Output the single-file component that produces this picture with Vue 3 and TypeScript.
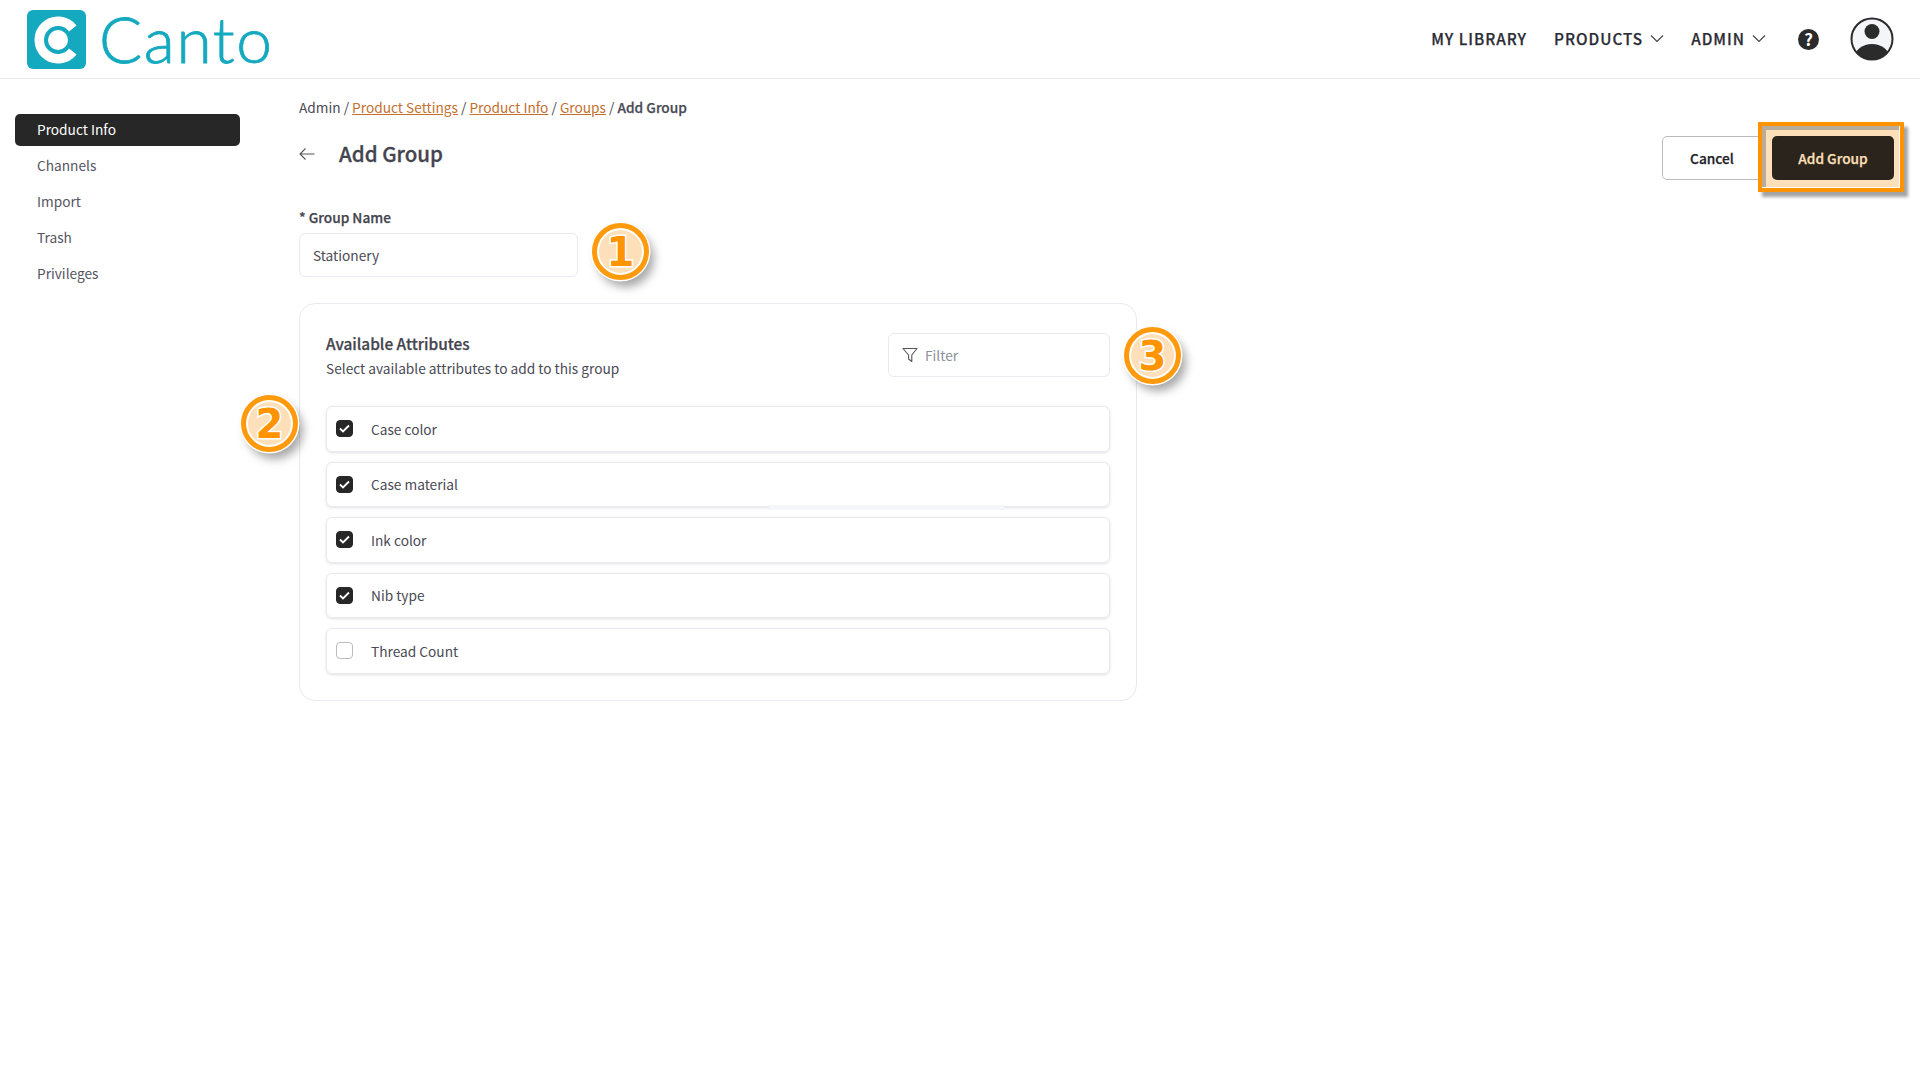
<script setup lang="ts">
const sideItems = ['Product Info', 'Channels', 'Import', 'Trash', 'Privileges']

const attributes = [
  { name: 'Case color', checked: true },
  { name: 'Case material', checked: true },
  { name: 'Ink color', checked: true },
  { name: 'Nib type', checked: true },
  { name: 'Thread Count', checked: false }
]
</script>

<template>
  <div class="page">
    <header class="topbar">
      <div class="logo">
        <svg class="logo-mark" width="59" height="59" viewBox="0 0 59 59">
          <rect width="59" height="59" rx="6" fill="#14a9bf" />
          <path d="M45.8 18.5 A18.75 18.75 0 1 0 45.8 41.5" fill="none" stroke="#fff" stroke-width="9.5" />
          <circle cx="31" cy="30" r="10" fill="#fff" />
        </svg>
        <span class="logo-word">Canto</span>
      </div>
      <nav class="topnav">
        <a class="nav-link">MY LIBRARY</a>
        <a class="nav-link">PRODUCTS
          <svg width="14" height="9" viewBox="0 0 14 9"><path d="M1 1.5l6 6 6-6" fill="none" stroke="#44444c" stroke-width="1.2" /></svg>
        </a>
        <a class="nav-link">ADMIN
          <svg width="14" height="9" viewBox="0 0 14 9"><path d="M1 1.5l6 6 6-6" fill="none" stroke="#44444c" stroke-width="1.2" /></svg>
        </a>
        <span class="help">?</span>
        <svg class="avatar" width="44" height="44" viewBox="0 0 44 44">
          <defs>
            <clipPath id="avatar-clip"><circle cx="22" cy="22" r="20.5" /></clipPath>
          </defs>
          <circle cx="22" cy="22" r="20.5" fill="#f4f5f9" />
          <circle cx="22" cy="14.5" r="7.5" fill="#2b2b2b" />
          <ellipse cx="22" cy="40" rx="17" ry="13" fill="#2b2b2b" clip-path="url(#avatar-clip)" />
          <circle cx="22" cy="22" r="20.5" fill="none" stroke="#2b2b2b" stroke-width="2" />
        </svg>
      </nav>
    </header>

    <div class="layout">
      <aside class="sidebar">
        <a
          v-for="(item, index) in sideItems"
          :key="item"
          class="side-item"
          :class="{ active: index === 0 }"
        >{{ item }}</a>
      </aside>

      <main class="content">
        <div class="breadcrumb">
          Admin / <a>Product Settings</a> / <a>Product Info</a> / <a>Groups</a> / <strong>Add Group</strong>
        </div>

        <div class="title-row">
          <div class="title">
            <svg width="16" height="12" viewBox="0 0 16 12"><path d="M15.5 6H1M6.5.5L1 6l5.5 5.5" fill="none" stroke="#55555c" stroke-width="1.1" /></svg>
            <h1>Add Group</h1>
          </div>
          <div class="actions">
            <button class="btn btn-cancel">Cancel</button>
            <div class="add-wrap">
              <span class="mark"></span>
              <button class="btn btn-add">Add Group</button>
            </div>
          </div>
        </div>

        <label class="field-label">* Group Name</label>
        <div class="input name-input">Stationery</div>

        <section class="card">
          <div class="card-head">
            <div>
              <h2>Available Attributes</h2>
              <p>Select available attributes to add to this group</p>
            </div>
            <div class="input filter">
              <svg width="16" height="16" viewBox="0 0 16 16"><path d="M1 1.5h14L9.8 8v6.5L6.6 12V8z" fill="none" stroke="#55555c" stroke-width="1.1" stroke-linejoin="round" /></svg>
              <span>Filter</span>
            </div>
          </div>
          <div class="rows">
            <div v-for="(attr, index) in attributes" :key="attr.name" class="row">
              <span class="check" :class="{ on: attr.checked }">
                <svg v-if="attr.checked" width="11" height="9" viewBox="0 0 11 9"><path d="M1 4.5l3 3 6-6" fill="none" stroke="#fff" stroke-width="1.8" /></svg>
              </span>
              <span>{{ attr.name }}</span>
              <span v-if="index === 1" class="smudge"></span>
            </div>
          </div>
        </section>
      </main>
    </div>

    <span class="badge badge-1">1</span>
    <span class="badge badge-2">2</span>
    <span class="badge badge-3">3</span>
  </div>
</template>

<style>
html,
body {
  margin: 0;
  background: #fff;
}
</style>

<style scoped>
.page {
  position: relative;
  min-height: 1080px;
  font-family: "Noto Sans CJK JP", "Noto Sans", sans-serif;
  font-size: 13.7px;
  line-height: 20px;
  color: #4a4a55;
}

.topbar {
  display: flex;
  align-items: center;
  justify-content: space-between;
  height: 78px;
  padding: 0 26px 0 27px;
  border-bottom: 1px solid #e9e9ec;
}

.logo {
  display: flex;
  align-items: center;
  gap: 13px;
}

.logo-word {
  font-family: "Lato", sans-serif;
  font-weight: 300;
  font-size: 64px;
  line-height: 64px;
  letter-spacing: 1.6px;
  color: #14a9bf;
  -webkit-text-stroke: 0.8px #14a9bf;
}

.topnav {
  display: flex;
  align-items: center;
}

.nav-link {
  display: flex;
  align-items: center;
  gap: 7px;
  margin-right: 27px;
  margin-bottom: 2px;
  font-size: 15.3px;
  font-weight: 500;
  letter-spacing: 1px;
  color: #2c2c36;
  -webkit-text-stroke: 0.25px #2c2c36;
}

.help {
  display: flex;
  align-items: center;
  justify-content: center;
  width: 21px;
  height: 21px;
  margin: 0 31px 0 5px;
  border-radius: 50%;
  background: #2b2b2b;
  color: #fff;
  font-size: 17px;
  font-weight: 700;
}

.layout {
  display: flex;
}

.sidebar {
  display: flex;
  flex-direction: column;
  gap: 4px;
  box-sizing: border-box;
  width: 299px;
  padding: 35px 59px 0 15px;
}

.side-item {
  height: 32px;
  padding-left: 22px;
  border-radius: 5px;
  line-height: 30px;
  color: #55555f;
}

.side-item.active {
  background: #272727;
  color: #fff;
}

.content {
  flex: 1;
  padding: 18px 26px 0 0;
}

.breadcrumb a {
  color: #c4702f;
  text-decoration: underline;
}

.breadcrumb strong {
  font-weight: 500;
  -webkit-text-stroke: 0.25px #4a4a55;
}

.title-row {
  display: flex;
  justify-content: space-between;
  margin-top: 19px;
}

.title {
  display: flex;
  align-items: center;
  height: 34px;
}

.title svg {
  margin-right: 24px;
  margin-top: 2px;
}

.title h1 {
  margin: 0;
  font-size: 20.5px;
  font-weight: 500;
  color: #44444e;
  -webkit-text-stroke: 0.3px #44444e;
}

.actions {
  display: flex;
  gap: 10px;
}

.add-wrap {
  position: relative;
}

.btn {
  display: block;
  box-sizing: border-box;
  height: 44px;
  border-radius: 5px;
  font-family: inherit;
  font-size: 13.7px;
  font-weight: 500;
  -webkit-text-stroke: 0.25px currentColor;
}

.btn-cancel {
  width: 100px;
  border: 1px solid #bbb;
  background: #fff;
  color: #22222a;
}

.btn-add {
  position: relative;
  width: 122px;
  border: none;
  background: #2a241d;
  color: #fde0ba;
}

.mark {
  position: absolute;
  inset: -14px -10px -12px -14px;
  border: 4px solid #ff9400;
  background: #fde0ba;
  box-shadow:
    inset -1px -1px 0 #fff,
    inset 4px 4px 0 #b8ad9c,
    4px 5px 3px #a4a4a4;
}

.field-label {
  display: block;
  margin-top: 27px;
  font-weight: 500;
  color: #44444e;
  -webkit-text-stroke: 0.25px #44444e;
}

.input {
  box-sizing: border-box;
  height: 44px;
  border: 1px solid #e9e9ef;
  border-radius: 6px;
  background: #fff;
  line-height: 42px;
}

.name-input {
  width: 279px;
  margin-top: 6px;
  padding-left: 13px;
}

.card {
  box-sizing: border-box;
  width: 838px;
  margin-top: 26px;
  padding: 28px 26px 26px;
  border: 1px solid #e9e9ef;
  border-radius: 16px;
}

.card-head {
  display: flex;
  justify-content: space-between;
  align-items: flex-start;
  margin-bottom: 28px;
}

.card-head h2 {
  margin: 0 0 4px;
  font-size: 15.4px;
  line-height: 22px;
  font-weight: 500;
  color: #44444e;
  -webkit-text-stroke: 0.25px #44444e;
}

.card-head p {
  margin: 0;
}

.filter {
  display: flex;
  align-items: center;
  gap: 7px;
  width: 222px;
  margin-top: 1px;
  padding-left: 13px;
  color: #8c8f9c;
}

.rows {
  display: flex;
  flex-direction: column;
  gap: 10px;
}

.row {
  position: relative;
  display: flex;
  align-items: center;
  gap: 18px;
  box-sizing: border-box;
  height: 45.5px;
  padding-left: 9px;
  border: 1px solid #e9e9ef;
  border-radius: 6px;
  box-shadow: 0 1px 3px rgba(0, 0, 0, 0.12);
}

.check {
  display: flex;
  align-items: center;
  justify-content: center;
  box-sizing: border-box;
  width: 17px;
  height: 17px;
  border: 1px solid #bbb;
  border-radius: 4px;
}

.check.on {
  border-color: #272727;
  background: #272727;
}

.smudge {
  position: absolute;
  left: 442px;
  bottom: -4px;
  width: 235px;
  height: 5px;
  background: #f5f6f9;
}

.badge {
  position: absolute;
  display: flex;
  align-items: center;
  justify-content: center;
  box-sizing: border-box;
  width: 57px;
  height: 57px;
  border: 5px solid #ff9a0d;
  border-radius: 50%;
  background: #fde0ba;
  box-shadow:
    inset 0 0 0 2px #fff,
    0 0 0 1.5px #fff,
    5px 7px 10px rgba(0, 0, 0, 0.35);
  font-family: "DejaVu Sans", sans-serif;
  font-size: 40px;
  font-weight: 700;
  color: #ff9400;
  -webkit-text-stroke: 3px #fff;
  paint-order: stroke fill;
}

.badge-1 {
  left: 592px;
  top: 223px;
}

.badge-2 {
  left: 241px;
  top: 395px;
}

.badge-3 {
  left: 1124px;
  top: 327px;
}
</style>
